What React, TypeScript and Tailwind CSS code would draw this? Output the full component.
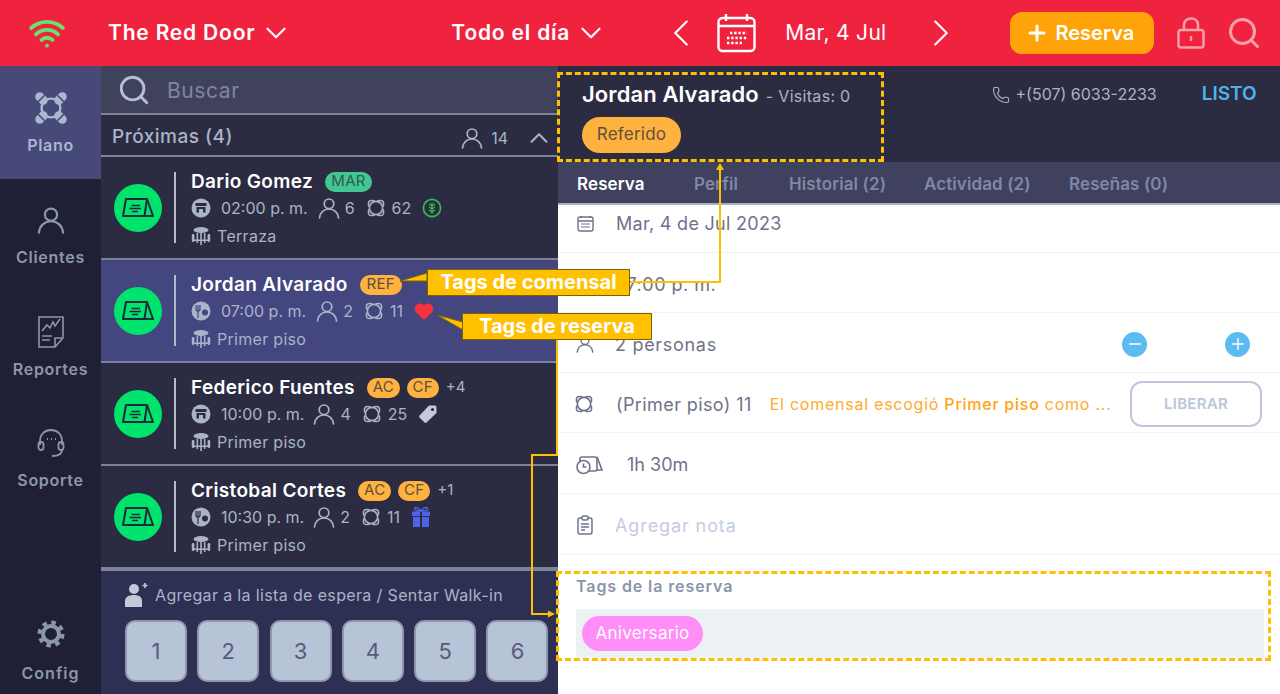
import React from "react";
import { ChevronDown, ChevronLeft, ChevronRight, ChevronUp, Phone, Plus, Search, Minus, Wifi, Heart } from "lucide-react";

const TableIcon = ({ c = "#aab3c8", s = 20 }: { c?: string; s?: number }) => (
  <svg width={s} height={s} viewBox="0 0 20 20" fill="none" stroke={c} strokeWidth="1.6" className="shrink-0">
    <circle cx="10" cy="10" r="6.6" />
    <path d="M2.8 8 Q1 1 8 2.8 M12 2.8 Q19 1 17.2 8 M17.2 12 Q19 19 12 17.2 M8 17.2 Q1 19 2.8 12" strokeLinecap="round" />
  </svg>
);

const PlanoIcon = () => (
  <svg width="36" height="36" viewBox="0 0 36 36" fill="none" className="shrink-0">
    <circle cx="18" cy="18" r="9.4" stroke="#a9b8d3" strokeWidth="2.4" />
    {[45, 135, 225, 315].map((a) => (
      <g key={a} transform={`rotate(${a} 18 18)`}>
        <rect x="13.5" y="-2.5" width="9" height="14" rx="4.5" fill="#a9b8d3" />
        <path d="M13.5 4.5 H22.5" stroke="#474a78" strokeWidth="1.6" />
      </g>
    ))}
  </svg>
);

const PersonIcon = ({ c = "#aab3c8", s = 22 }: { c?: string; s?: number }) => (
  <svg width={s} height={s} viewBox="0 0 22 22" fill="none" stroke={c} strokeWidth="1.7" strokeLinecap="round" className="shrink-0">
    <circle cx="11" cy="6.8" r="4.8" />
    <path d="M1.5 21 C2 15.5 6 12 11 12 C16 12 20 15.5 20.5 21" />
  </svg>
);

const Tent = () => (
  <div className="w-12 h-12 rounded-full bg-[#00e36c] flex items-center justify-center shrink-0">
    <svg width="34" height="22" viewBox="0 0 34 22" fill="none" stroke="#1e2a3a" strokeWidth="2" strokeLinejoin="round">
      <path d="M5 2 H26 L23.5 19 H2 Z" fill="#00e36c" />
      <path d="M26 2 L32 19 H23.5" />
      <path d="M10.5 8.5 H19 M8.5 11.5 H20 M11 14.5 H17" strokeWidth="1.7" />
    </svg>
  </div>
);

const FloorIcon = () => (
  <svg width="20" height="20" viewBox="0 0 20 20" fill="#aab3c8" className="shrink-0">
    <ellipse cx="10" cy="4" rx="7.5" ry="3" />
    <rect x="5.6" y="7" width="1.5" height="10" />
    <rect x="12.9" y="7" width="1.5" height="10" />
    <rect x="9.2" y="7" width="1.6" height="12" />
    <rect x="0.8" y="8" width="2.6" height="8" rx="1.3" />
    <rect x="16.6" y="8" width="2.6" height="8" rx="1.3" />
    <rect x="1" y="13.5" width="18" height="1.5" />
  </svg>
);

const ShopIcon = () => (
  <svg width="20" height="20" viewBox="0 0 20 20" className="shrink-0">
    <circle cx="10" cy="10" r="9.5" fill="#aab3c8" />
    <path d="M4.5 5 H15.5 V8 H4.5 Z M5.5 9 H14.5 V14.5 H12 V11 H8 V14.5 H5.5 Z" fill="#2b2c42" />
  </svg>
);

const DinerIcon = ({ bg }: { bg: string }) => (
  <svg width="20" height="20" viewBox="0 0 20 20" className="shrink-0">
    <circle cx="10" cy="10" r="9.5" fill="#aab3c8" />
    <path d="M5 4 V8 Q5 10 7 10 Q9 10 9 8 V4 M7 4 V17" stroke={bg} strokeWidth="1.2" fill="none" />
    <circle cx="14" cy="11.5" r="3" fill={bg} />
  </svg>
);

const Wheat = () => (
  <svg width="20" height="20" viewBox="0 0 20 20" fill="none" stroke="#2fc24f" strokeWidth="1.6" className="shrink-0">
    <circle cx="10" cy="10" r="8.6" />
    <path d="M10 4.5 V16 M10 8 L7 6 M10 8 L13 6 M10 11 L7 9 M10 11 L13 9 M10 14 L7 12 M10 14 L13 12" strokeWidth="1.2" />
  </svg>
);

const TagIcon = ({ bg }: { bg: string }) => (
  <svg width="20" height="20" viewBox="0 0 20 20" className="shrink-0">
    <path d="M11 1.5 H17 Q18.5 1.5 18.5 3 V9 L8.5 18.5 Q7.5 19.3 6.5 18.5 L1.5 13.5 Q0.8 12.5 1.5 11.5 Z" fill="#c2cada" />
    <circle cx="14.5" cy="5.5" r="1.6" fill={bg} />
  </svg>
);

const GiftIcon = () => (
  <svg width="20" height="22" viewBox="0 0 20 22" className="shrink-0">
    <path d="M10 5 C6 0 2 1 4 4 Q5 5 10 5 C15 5 15 5 16 4 C18 1 14 0 10 5" fill="none" stroke="#4d63e8" strokeWidth="1.4" />
    <rect x="1" y="5.5" width="8" height="4.5" fill="#4d63e8" />
    <rect x="11" y="5.5" width="8" height="4.5" fill="#4d63e8" />
    <rect x="2" y="11" width="7" height="10" fill="#4d63e8" />
    <rect x="11" y="11" width="7" height="10" fill="#4d63e8" />
  </svg>
);

const Pill = ({ t, bg = "bg-[#ffb23f]", fg = "text-[#5d5140]", w }: { t: string; bg?: string; fg?: string; w: string }) => (
  <span className={`h-[20px] rounded-full flex items-center justify-center text-[15px] tracking-[0.3px] ${bg} ${fg} ${w}`}>{t}</span>
);

type RowP = {
  name: string;
  tags: React.ReactNode;
  meal: React.ReactNode;
  time: string;
  n: string;
  table: string;
  extra?: React.ReactNode;
  floor: string;
  active?: boolean;
  gapTime: string;
  gapPeople: string;
};

const Row = ({ name, tags, meal, time, n, table, extra, floor, active, gapTime, gapPeople }: RowP) => (
  <div className={`h-[103px] flex items-center pl-[13px] border-b-2 border-[#7b8299] ${active ? "bg-[#444680]" : "bg-[#2b2c42]"}`}>
    <Tent />
    <div className="w-[2px] h-[71px] bg-[#b5bac8] ml-[12px] mr-[15px]" />
    <div className="flex flex-col h-[78px] pt-[2px] justify-between">
      <div className="flex items-center h-[22px]">
        <span className="text-white text-[19px] font-semibold tracking-[0.35px] leading-none mr-[12px]">{name}</span>
        {tags}
      </div>
      <div className="flex items-center h-[22px] -mt-[1px] mb-[1px] text-[#aab3c8] text-[16px]">
        {meal}
        <span className={`ml-[10px] ${gapTime}`}>{time}</span>
        <PersonIcon />
        <span className={`ml-[5px] ${gapPeople}`}>{n}</span>
        <TableIcon />
        <span className="ml-[6px] mr-[11px]">{table}</span>
        {extra}
      </div>
      <div className="flex items-center h-[22px] text-[#aab3c8] text-[16px] tracking-[0.3px] gap-[6px]">
        <FloorIcon />
        <span>{floor}</span>
      </div>
    </div>
  </div>
);

const NavItem = ({ icon, label, active, cls }: { icon: React.ReactNode; label: string; active?: boolean; cls: string }) => (
  <div className={`flex flex-col items-center ${cls} ${active ? "bg-[#474a78]" : ""}`}>
    <div className="h-[36px] flex items-center justify-center">{icon}</div>
    <span className={`mt-[7px] text-[16px] tracking-[0.7px] font-semibold ${active ? "text-[#a9b8d3]" : "text-[#8c97ad]"}`}>{label}</span>
  </div>
);

const DetailRow = ({ h, children }: { h: string; children: React.ReactNode }) => (
  <div className={`flex items-center pl-[18px] border-b border-[#f1f4f6] text-[#6f7388] text-[18px] ${h}`}>{children}</div>
);

export default function App() {
  return (
    <div className="w-[1280px] h-[694px] overflow-hidden relative flex flex-col bg-white font-['Inter',sans-serif]">
      <header className="h-[66px] shrink-0 bg-[#f0233f] flex items-center text-white">
        <Wifi size={38} color="#66e36f" strokeWidth={2.4} className="ml-[28px] shrink-0" />
        <span className="ml-[42px] text-[21px] tracking-[0.8px] font-semibold whitespace-nowrap">The Red Door</span>
        <ChevronDown size={34} strokeWidth={1.5} className="ml-[4px] shrink-0" />
        <span className="ml-[158px] text-[21px] tracking-[0.8px] font-semibold whitespace-nowrap">Todo el día</span>
        <ChevronDown size={34} strokeWidth={1.5} className="ml-[4px] shrink-0" />
        <ChevronLeft size={46} strokeWidth={1.1} className="ml-[50px] shrink-0" />
        <svg width="40" height="40" viewBox="0 0 40 40" fill="none" stroke="white" strokeWidth="2.4" className="ml-[13px] shrink-0">
          <rect x="1.5" y="5" width="36" height="33" rx="4" />
          <path d="M1.5 13 H37.5 M9 1 V8 M30 1 V8" />
          <path d="M13 20 H30 M10 25 H30 M10 30 H26" strokeWidth="2.4" strokeDasharray="2.4 1.8" />
        </svg>
        <span className="ml-[28px] text-[21px] tracking-[0.3px] whitespace-nowrap">Mar, 4 Jul</span>
        <ChevronRight size={46} strokeWidth={1.1} className="ml-[31px] shrink-0" />
        <div className="ml-[46px] w-[144px] h-[42px] rounded-[12px] bg-[#ffa408] flex items-center pl-[15px] gap-[7px] shrink-0">
          <Plus size={24} strokeWidth={3} />
          <span className="text-[20px] font-semibold">Reserva</span>
        </div>
        <svg width="28" height="32" viewBox="0 0 28 32" fill="none" stroke="#f5a0ab" strokeWidth="2.4" className="ml-[23px] shrink-0">
          <rect x="1.5" y="13" width="25" height="17.5" rx="2.5" />
          <path d="M7 13 V8 C7 4 10 1.5 14 1.5 C18 1.5 21 4 21 8 V13" />
          <path d="M14 19 V24" />
        </svg>
        <Search size={36} strokeWidth={2} color="#f5a0ab" className="ml-[21px] shrink-0" />
      </header>

      <div className="flex flex-1 min-h-0">
        <nav className="w-[101px] shrink-0 bg-[#1f2035] flex flex-col">
          <NavItem active label="Plano" cls="h-[113px] pt-[24px]" icon={<PlanoIcon />} />
          <NavItem label="Clientes" cls="h-[111px] pt-[23px]" icon={<PersonIcon c="#8c97ad" s={28} />} />
          <NavItem
            label="Reportes"
            cls="h-[112px] pt-[24px]"
            icon={
              <svg width="26" height="32" viewBox="0 0 26 32" fill="none" stroke="#8c97ad" strokeWidth="1.6">
                <path d="M1 1 H25 V22 L17 31 H1 Z M25 22 H17 V31" />
                <path d="M4 15 L9 9 L12 12 L15 6 L17 10 L22 3" />
                <path d="M4 20 H14 M4 24 H12" />
              </svg>
            }
          />
          <NavItem
            label="Soporte"
            cls="h-[112px] pt-[23px]"
            icon={
              <svg width="28" height="30" viewBox="0 0 28 30" fill="none" stroke="#8c97ad" strokeWidth="1.8">
                <path d="M3 17 V13 C3 6 8 2 14 2 C20 2 25 6 25 13 V17" />
                <rect x="1.5" y="14" width="5" height="8" rx="2.5" />
                <rect x="21.5" y="14" width="5" height="8" rx="2.5" />
                <path d="M25 22 C25 26 21 28 15 28" />
                <path d="M10 11 H11 M14 11 H15 M18 11 H19" />
              </svg>
            }
          />
          <div className="mt-auto h-[74px] flex flex-col items-center">
            <svg width="28" height="28" viewBox="0 0 28 28" fill="none" stroke="#8c97ad" className="shrink-0">
              <circle cx="14" cy="14" r="8" strokeWidth="4" />
              <circle cx="14" cy="14" r="11.5" strokeWidth="4" strokeDasharray="4.5 4.53" />
            </svg>
            <span className="mt-[13px] text-[16px] tracking-[1px] font-semibold text-[#8c97ad]">Config</span>
          </div>
        </nav>

        <section className="w-[457px] shrink-0 flex flex-col bg-[#2b2c42]">
          <div className="h-[49px] shrink-0 bg-[#40415a] border-b-2 border-[#7b8299] flex items-center pl-[16px]">
            <Search size={34} color="#b5c0d4" strokeWidth={2} />
            <span className="ml-[16px] mt-[3px] text-[21px] tracking-[0.6px] text-[#7f879e]">Buscar</span>
          </div>
          <div className="h-[42px] shrink-0 border-b-2 border-[#7b8299] flex items-center pl-[11px] pt-[5px] text-[#aab3c8]">
            <span className="text-[19px] tracking-[0.5px] font-medium">Próximas (4)</span>
            <span className="ml-auto"><PersonIcon /></span>
            <span className="ml-[8px] text-[16px]">14</span>
            <ChevronUp size={30} strokeWidth={1.6} className="ml-[16px] mr-[4px]" />
          </div>
          <Row
            name="Dario Gomez"
            tags={<Pill t="MAR" bg="bg-[#42c794]" fg="text-[#2e5a52]" w="w-[47px]" />}
            meal={<ShopIcon />}
            time="02:00 p. m."
            gapTime="mr-[10px]"
            gapPeople="mr-[11px]"
            n="6"
            table="62"
            extra={<Wheat />}
            floor="Terraza"
          />
          <Row
            active
            name="Jordan Alvarado"
            tags={<Pill t="REF" w="w-[42px]" />}
            meal={<DinerIcon bg="#444680" />}
            time="07:00 p. m."
            gapTime="mr-[10px]"
            gapPeople="mr-[11px]"
            n="2"
            table="11"
            extra={<Heart size={20} fill="#f4333f" color="#f4333f" />}
            floor="Primer piso"
          />
          <Row
            name="Federico Fuentes"
            tags={
              <div className="flex items-center gap-[7px]">
                <Pill t="AC" w="w-[33px]" />
                <Pill t="CF" w="w-[32px]" />
                <span className="text-[#aab3c8] text-[15px]">+4</span>
              </div>
            }
            meal={<ShopIcon />}
            time="10:00 p. m."
            gapTime="mr-[9px]"
            gapPeople="mr-[11px]"
            n="4"
            table="25"
            extra={<TagIcon bg="#2b2c42" />}
            floor="Primer piso"
          />
          <Row
            name="Cristobal Cortes"
            tags={
              <div className="flex items-center gap-[7px]">
                <Pill t="AC" w="w-[33px]" />
                <Pill t="CF" w="w-[32px]" />
                <span className="text-[#aab3c8] text-[15px]">+1</span>
              </div>
            }
            meal={<DinerIcon bg="#2b2c42" />}
            time="10:30 p. m."
            gapTime="mr-[9px]"
            gapPeople="mr-[11px]"
            n="2"
            table="11"
            extra={<GiftIcon />}
            floor="Primer piso"
          />
          <div className="flex-1 border-t-2 border-[#7b8299] bg-[#2e3053] flex flex-col pl-[24px] pt-[8px]">
            <div className="flex items-center h-[32px] text-[#aab3c8] text-[16px] tracking-[0.36px]">
              <svg width="24" height="26" viewBox="0 0 24 26" fill="#c2cada">
                <circle cx="9" cy="7" r="5" />
                <path d="M0 25 V19 C0 15 4 13 9 13 C14 13 17 15 17 19 V25 Z" />
                <path d="M20 1 V6 M17.5 3.5 H22.5" stroke="#c2cada" strokeWidth="1.6" />
              </svg>
              <span className="ml-[6px] whitespace-nowrap">Agregar a la lista de espera / Sentar Walk-in</span>
            </div>
            <div className="flex gap-[10.3px] mt-[9px]">
              {["1", "2", "3", "4", "5", "6"].map((d) => (
                <div key={d} className="w-[62px] h-[62px] rounded-[10px] bg-[#b7c3d6] border-2 border-[#8d97ae] flex items-center justify-center text-[#565b7a] text-[22px]">{d}</div>
              ))}
            </div>
          </div>
        </section>

        <main className="flex-1 flex flex-col min-w-0">
          <div className="h-[96px] shrink-0 bg-[#2b2c42] flex items-start pl-[24px] pt-[12px]">
            <div className="shrink-0">
              <div className="flex items-baseline">
                <span className="text-white text-[22px] tracking-[0.1px] font-semibold">Jordan Alvarado</span>
                <span className="ml-[7px] text-[#aab3c8] text-[16px] tracking-[0.3px]">- Visitas: 0</span>
              </div>
              <div className="mt-[6px] w-[99px] h-[36px] rounded-full bg-[#ffb23f] text-[#5d5140] text-[17px] tracking-[0.2px] flex items-center justify-center">Referido</div>
            </div>
            <Phone size={18} color="#aab3c8" strokeWidth={1.5} className="ml-[141px] mt-[8px] shrink-0" />
            <span className="ml-[6px] mt-[4px] text-[#aab3c8] text-[16px] leading-[24px] whitespace-nowrap">+(507) 6033-2233</span>
            <span className="ml-[45px] mt-[4px] text-[#4fb3ea] text-[19px] font-semibold leading-[24px]">LISTO</span>
          </div>
          <div className="h-[43px] shrink-0 bg-[#40415f] border-b-2 border-[#a9b0c2] flex items-center pl-[19px] pt-[4px] text-[17px] tracking-[0.1px] font-semibold text-[#7f89a4]">
            <span className="text-white w-[117px]">Reserva</span>
            <span className="w-[95px]">Perfil</span>
            <span className="w-[135px]">Historial (2)</span>
            <span className="w-[145px]">Actividad (2)</span>
            <span>Reseñas (0)</span>
          </div>
          <DetailRow h="h-[48px] pb-[10px]">
            <svg width="17" height="17" viewBox="0 0 17 17" fill="none" stroke="#6f7388" strokeWidth="1.4" className="ml-[1px]">
              <rect x="1" y="2" width="15" height="14" rx="2" />
              <path d="M1 6 H16 M4 1 V3 M13 1 V3" />
              <path d="M4 9 H13 M4 12 H13" strokeWidth="1" />
            </svg>
            <span className="ml-[22px] tracking-[0.3px]">Mar, 4 de Jul 2023</span>
          </DetailRow>
          <DetailRow h="h-[60px] pt-[3px]">
            <span className="ml-[39px] tracking-[0.5px]">07:00 p. m.</span>
          </DetailRow>
          <DetailRow h="h-[60px] pt-[3px]">
            <PersonIcon c="#6f7388" s={18} />
            <span className="ml-[21px] tracking-[0.7px]">2 personas</span>
            <span className="ml-auto w-[25px] h-[25px] rounded-full bg-[#5bbcf2] flex items-center justify-center"><Minus size={18} color="white" /></span>
            <span className="ml-[78px] mr-[30px] w-[25px] h-[25px] rounded-full bg-[#5bbcf2] flex items-center justify-center"><Plus size={18} color="white" /></span>
          </DetailRow>
          <DetailRow h="h-[60px] pt-[3px]">
            <span className="-ml-[2px]"><TableIcon c="#6f7388" /></span>
            <span className="ml-[22px] tracking-[0.4px] whitespace-nowrap">(Primer piso) 11</span>
            <span className="ml-[18px] text-[16px] tracking-[0.75px] text-[#ffab2e] whitespace-nowrap">
              El comensal escogió <span className="text-[#ffa310] font-medium">Primer piso</span> como ...
            </span>
            <span className="ml-auto mr-[18px] w-[132px] h-[46px] rounded-[12px] border-2 border-[#bcc6dc] text-[#bcc6dc] text-[15px] tracking-[0.3px] font-semibold flex items-center justify-center shrink-0">LIBERAR</span>
          </DetailRow>
          <DetailRow h="h-[61px] pt-[3px]">
            <svg width="27" height="20" viewBox="0 0 27 20" fill="none" stroke="#6f7388" strokeWidth="1.6">
              <rect x="4" y="2" width="17" height="14" rx="2" />
              <path d="M21 2 L26 15 H20" />
              <circle cx="7.5" cy="12" r="6.5" fill="white" />
              <path d="M7.5 8.5 V12 H10.5" />
            </svg>
            <span className="ml-[24px]">1h 30m</span>
          </DetailRow>
          <DetailRow h="h-[61px] pt-[2px]">
            <svg width="16" height="20" viewBox="0 0 16 20" fill="none" stroke="#6f7388" strokeWidth="1.5" className="ml-[1px]">
              <rect x="1" y="3" width="14" height="16" rx="2" />
              <rect x="5" y="1" width="6" height="4" rx="1.5" fill="white" />
              <path d="M4 9 H12 M4 12 H12 M4 15 H8" />
            </svg>
            <span className="ml-[22px] tracking-[0.9px] text-[#c3cde0]">Agregar nota</span>
          </DetailRow>
          <div className="pl-[18px] pt-[21px] pr-[16px]">
            <div className="text-[16px] tracking-[0.9px] font-semibold text-[#8a94aa] leading-[20px]">Tags de la reserva</div>
            <div className="mt-[13px] h-[49px] bg-[#ecf1f4] flex items-center pl-[6px]">
              <span className="w-[121px] h-[35px] rounded-full bg-[#ff8ef8] text-white text-[17px] tracking-[0.3px] flex items-center justify-center">Aniversario</span>
            </div>
          </div>
        </main>
      </div>

      {/* Annotation layer */}
      <div className="absolute left-[557px] top-[72px] w-[327px] h-[90px] border-[3px] border-dashed border-[#ffc000]" />
      <div className="absolute left-[556px] top-[571px] w-[715px] h-[90px] border-[3px] border-dashed border-[#ffc000]" />
      <svg width="1280" height="694" className="absolute left-0 top-0 pointer-events-none" fill="none">
        <path d="M630 282 H720 V168" stroke="#ffc000" strokeWidth="2" />
        <path d="M720 163 L716 170 H724 Z" fill="#ffc000" />
        <path d="M557 340 V455 H532 V614 H548" stroke="#ffc000" strokeWidth="2" />
        <path d="M555 614 L548 610.5 V617.5 Z" fill="#ffc000" />
        <path d="M427 273 L400 281 L427 281 Z" fill="#ffc000" stroke="#7f6000" strokeWidth="1" />
        <path d="M463 322 L437 315 L463 330 Z" fill="#ffc000" stroke="#7f6000" strokeWidth="1" />
      </svg>
      <div className="absolute left-[427px] top-[269px] w-[203px] h-[27px] bg-[#ffc000] border border-[#7f6000] text-white text-[20px] font-bold flex items-center justify-center leading-none whitespace-nowrap pb-[2px]">Tags de comensal</div>
      <div className="absolute left-[462px] top-[313px] w-[190px] h-[27px] bg-[#ffc000] border border-[#7f6000] text-white text-[20px] font-bold flex items-center pl-[16px] leading-none whitespace-nowrap pb-[2px]">Tags de reserva</div>
    </div>
  );
}
